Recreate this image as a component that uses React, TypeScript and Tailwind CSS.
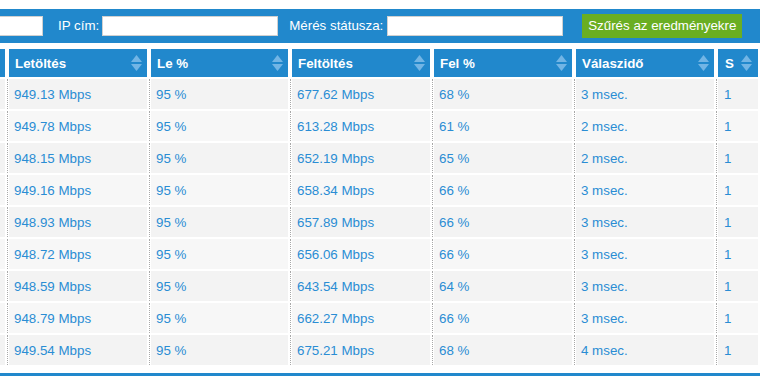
const rows = [
  { down: "949.13 Mbps", downPct: "95 %", up: "677.62 Mbps", upPct: "68 %", ping: "3 msec." },
  { down: "949.78 Mbps", downPct: "95 %", up: "613.28 Mbps", upPct: "61 %", ping: "2 msec." },
  { down: "948.15 Mbps", downPct: "95 %", up: "652.19 Mbps", upPct: "65 %", ping: "2 msec." },
  { down: "949.16 Mbps", downPct: "95 %", up: "658.34 Mbps", upPct: "66 %", ping: "3 msec." },
  { down: "948.93 Mbps", downPct: "95 %", up: "657.89 Mbps", upPct: "66 %", ping: "3 msec." },
  { down: "948.72 Mbps", downPct: "95 %", up: "656.06 Mbps", upPct: "66 %", ping: "3 msec." },
  { down: "948.59 Mbps", downPct: "95 %", up: "643.54 Mbps", upPct: "64 %", ping: "3 msec." },
  { down: "948.79 Mbps", downPct: "95 %", up: "662.27 Mbps", upPct: "66 %", ping: "3 msec." },
  { down: "949.54 Mbps", downPct: "95 %", up: "675.21 Mbps", upPct: "68 %", ping: "4 msec." },
];

// first and last columns are cut off by the viewport
const columns = [
  { title: "", width: "w-[138px]" },
  { title: "Letöltés", width: "w-[138px]" },
  { title: "Le %", width: "w-[137px]" },
  { title: "Feltöltés", width: "w-[138px]" },
  { title: "Fel %", width: "w-[138px]" },
  { title: "Válaszidő", width: "w-[138px]" },
  { title: "S", width: "w-[40px]" },
  { title: "", width: "w-[138px]" },
];

function SortIcon() {
  return (
    <svg width="11" height="16" viewBox="0 0 11 16" className="shrink-0">
      <polygon points="5.5,0 11,7 0,7" fill="#72b5e5" />
      <polygon points="0,9 11,9 5.5,16" fill="#72b5e5" />
    </svg>
  );
}

function Spacer({ dotted }: { dotted?: boolean }) {
  return (
    <div className="w-[4px] shrink-0 h-full">
      {dotted && <div className="ml-[2px] h-full w-0 border-l border-dotted border-[#a8a8a8]" />}
    </div>
  );
}

function App() {
  return (
    <div className="w-[760px] h-[376px] overflow-hidden bg-white font-['Liberation_Sans',Arial,sans-serif] text-[13.33px]">
      {/* filter bar */}
      <div className="mt-[9px] h-[34px] bg-[#2188cc] flex items-center text-white whitespace-nowrap">
        <input className="-ml-[133px] w-[176px] h-[20px] shrink-0 bg-white border border-[#d0d0d0] outline-none" type="text" />
        <span className="ml-[15px]">IP cím:</span>
        <input className="ml-[3px] w-[176px] h-[20px] shrink-0 bg-white border border-[#d0d0d0] outline-none" type="text" />
        <span className="ml-[11px]">Mérés státusza:</span>
        <input className="ml-[4px] w-[176px] h-[20px] shrink-0 bg-white border border-[#d0d0d0] outline-none" type="text" />
        <button className="ml-[19px] w-[160px] h-[24px] shrink-0 bg-[#6aae22] text-white text-[13.33px] flex items-center justify-center">
          Szűrés az eredményekre
        </button>
      </div>

      <div className="mt-[6px] -ml-[133px]">
        <div className="flex h-[28px]">
          {columns.map((col, i) => (
            <div key={i} className="flex shrink-0">
              {i > 0 && <Spacer />}
              <div
                className={`${col.width} shrink-0 h-[28px] bg-[#2188cc] flex items-center justify-between ${col.title === "S" ? "pl-[7px] pr-[6px]" : "pl-[6px] pr-[5px]"} text-white font-bold`}
              >
                <span className="pt-[1px]">{col.title}</span>
                <SortIcon />
              </div>
            </div>
          ))}
        </div>

        {rows.map((row, r) => {
          const cells = ["", row.down, row.downPct, row.up, row.upPct, row.ping, "1", ""];
          return (
            <div key={r} className="flex h-[30px] mt-[2px]">
              {columns.map((col, i) => (
                <div key={i} className="flex shrink-0 h-full">
                  {i > 0 && <Spacer dotted />}
                  <div
                    className={`${col.width} shrink-0 h-full flex items-center pt-[1px] ${col.title === "S" ? "pl-[6px]" : "pl-[5px]"} ${r % 2 === 0 ? "bg-[#f3f3f3]" : "bg-[#f7f7f7]"} text-[#2a8dd4] whitespace-nowrap`}
                  >
                    {cells[i]}
                  </div>
                </div>
              ))}
            </div>
          );
        })}

        <div className="mt-[8px] h-[10px] bg-[#2188cc]" />
      </div>
    </div>
  );
}

export default App;
